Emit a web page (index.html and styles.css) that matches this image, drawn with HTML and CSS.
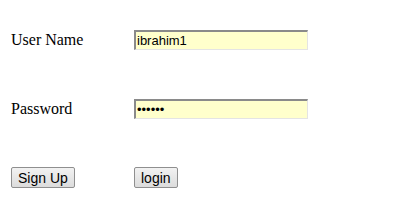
FILE: index.html
```html
<!DOCTYPE html>
<html>
<head>
    <link rel="stylesheet" href="styles.css">
</head>
<body>
    <form class="login-form">
        <label class="label" for="username">User Name</label>
        <div><input class="field" id="username" type="text" value="ibrahim1"></div>

        <label class="label" for="password">Password</label>
        <div><input class="field" id="password" type="password" value="secret"></div>

        <div><button class="button" type="button">Sign Up</button></div>
        <div><button class="button" type="submit">login</button></div>
    </form>
</body>
</html>
```

FILE: styles.css
```css
body {
    margin: 0;
    padding: 5px 0 0 11px;
    background: white;
    font-family: "Liberation Serif", "Times New Roman", serif;
    font-size: 16px;
    color: #000;
}

.login-form {
    display: grid;
    grid-template-columns: 123px 174px;
    grid-auto-rows: 69px;
    align-items: center;
}

.label {
    line-height: 20px;
}

.field {
    display: block;
    box-sizing: border-box;
    width: 174px;
    height: 20px;
    margin: 0;
    padding: 0 2px 0 1px;
    background: #ffffcc;
    border-style: solid;
    border-width: 2px 1px 1px 2px;
    border-color: #8a8a8a #e4e4e4 #e4e4e4 #8a8a8a;
    font-family: "Liberation Sans", Arial, sans-serif;
    font-size: 13px;
    color: #000;
    outline: none;
}

.button {
    display: block;
    box-sizing: border-box;
    height: 21px;
    margin: 0;
    padding: 0 6px;
    background: linear-gradient(#f2f2f2, #dcdcdc);
    border: 1px solid #8f8f8f;
    border-radius: 2px;
    font-family: "Liberation Sans", Arial, sans-serif;
    font-size: 14px;
    color: #000;
    cursor: pointer;
}
```
